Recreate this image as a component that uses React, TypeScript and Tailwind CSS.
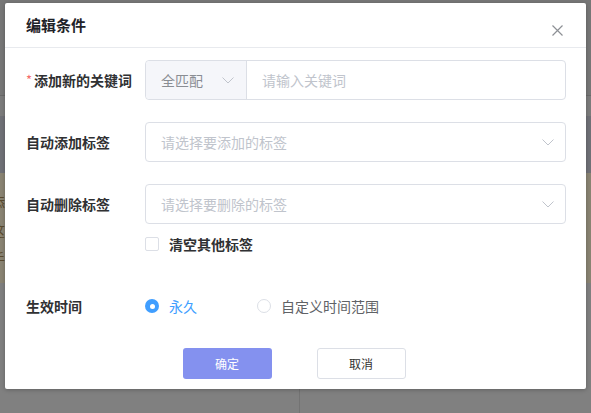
import React from 'react';

const font = { fontFamily: '"Noto Sans CJK SC", "Noto Sans", sans-serif' };

function Chevron() {
  return (
    <svg width="12" height="7" viewBox="0 0 12 7" fill="none">
      <path d="M0.5 0.5L6 6L11.5 0.5" stroke="#c0c4cc" strokeWidth="1" />
    </svg>
  );
}

function FormRow({ label, required, children }: { label: string; required?: boolean; children: React.ReactNode }) {
  return (
    <div className="flex h-[40px] items-center">
      <div className="flex w-[119px] shrink-0 items-center text-[14px] font-bold text-[#303133]">
        {required && <span className="inline-block w-[8px] text-[13px] font-normal text-[#f56c6c]">*</span>}
        {label}
      </div>
      {children}
    </div>
  );
}

function TagSelect({ placeholder }: { placeholder: string }) {
  return (
    <div className="flex h-full w-[421px] items-center justify-between rounded-[4px] border border-[#dcdfe6] bg-white pl-[15px] pr-[11px]">
      <span className="text-[14px] text-[#c0c4cc]">{placeholder}</span>
      <Chevron />
    </div>
  );
}

export default function App() {
  return (
    <div className="relative h-[413px] w-[591px] overflow-hidden bg-[#808080]" style={font}>
      {/* page underneath the mask */}
      <div className="flex h-full flex-col">
        <div className="h-[95px] bg-[#777777]" />
        <div className="h-px bg-[#6a6a6a]" />
        <div className="h-[20px] bg-[#7c7c7c]" />
        <div className="h-[57px] bg-[#707177]" />
        <div className="flex h-[110px] flex-col gap-[14px] bg-[#8a8473] pt-[22px] text-[14px] leading-none text-[#5b4a2e]">
          <span className="-ml-[9px]">添</span>
          <span className="-ml-[9px]">这</span>
          <span className="-ml-[9px]">手</span>
        </div>
        <div className="h-[105px] bg-[#808080]" />
        <div className="flex flex-1">
          <div className="w-[300px] border-r border-[#737373]" />
        </div>
      </div>

      {/* dialog */}
      <div className="absolute left-[5px] top-[3px] flex h-[386px] w-[581px] flex-col rounded-[2px] bg-white shadow-[0_1px_4px_rgba(0,0,0,0.25)]">
        <div className="flex h-[45px] shrink-0 items-center justify-between border-b border-[#e8eaee] pl-[21px] pr-[23px]">
          <span className="text-[15px] font-bold text-[#1f2329]">编辑条件</span>
          <svg className="mt-[10px]" width="11" height="11" viewBox="0 0 11 11" fill="none">
            <path d="M0.5 0.5L10.5 10.5M10.5 0.5L0.5 10.5" stroke="#8d9095" strokeWidth="1.2" />
          </svg>
        </div>

        <div className="flex flex-1 flex-col pl-[21px] pt-[12px]">
          <FormRow label="添加新的关键词" required>
            <div className="flex h-full w-[421px] rounded-[4px] border border-[#dcdfe6]">
              <div className="flex w-[101px] items-center justify-between rounded-l-[4px] border-r border-[#dcdfe6] bg-[#f5f6fa] pl-[15px] pr-[12px]">
                <span className="text-[14px] text-[#8a8d93]">全匹配</span>
                <Chevron />
              </div>
              <div className="flex flex-1 items-center pl-[15px] text-[14px] text-[#c0c4cc]">请输入关键词</div>
            </div>
          </FormRow>

          <div className="mt-[22px]">
            <FormRow label="自动添加标签">
              <TagSelect placeholder="请选择要添加的标签" />
            </FormRow>
          </div>

          <div className="mt-[22px]">
            <FormRow label="自动删除标签">
              <TagSelect placeholder="请选择要删除的标签" />
            </FormRow>
          </div>

          <div className="mt-[10px] flex h-[20px] items-center pl-[119px]">
            <span className="h-[14px] w-[14px] rounded-[2px] border border-[#dcdfe6] bg-white" />
            <span className="ml-[10px] text-[14px] font-bold text-[#303133]">清空其他标签</span>
          </div>

          <div className="mt-[32px]">
            <FormRow label="生效时间">
              <div className="flex items-center">
                <span className="flex h-[14px] w-[14px] items-center justify-center rounded-full bg-[#409eff]">
                  <span className="h-[5px] w-[5px] rounded-full bg-white" />
                </span>
                <span className="ml-[10px] text-[14px] text-[#409eff]">永久</span>
                <span className="ml-[60px] h-[14px] w-[14px] rounded-full border border-[#dcdfe6] bg-white" />
                <span className="ml-[10px] text-[14px] text-[#606266]">自定义时间范围</span>
              </div>
            </FormRow>
          </div>
        </div>

        <div className="flex shrink-0 justify-center gap-[45px] pb-[10px] pr-[3px]">
          <button className="h-[31px] w-[89px] rounded-[3px] bg-[#8491ef] text-[12px] text-white">确定</button>
          <button className="h-[31px] w-[89px] rounded-[3px] border border-[#dcdfe6] bg-white text-[12px] text-[#333333]">取消</button>
        </div>
      </div>
    </div>
  );
}
